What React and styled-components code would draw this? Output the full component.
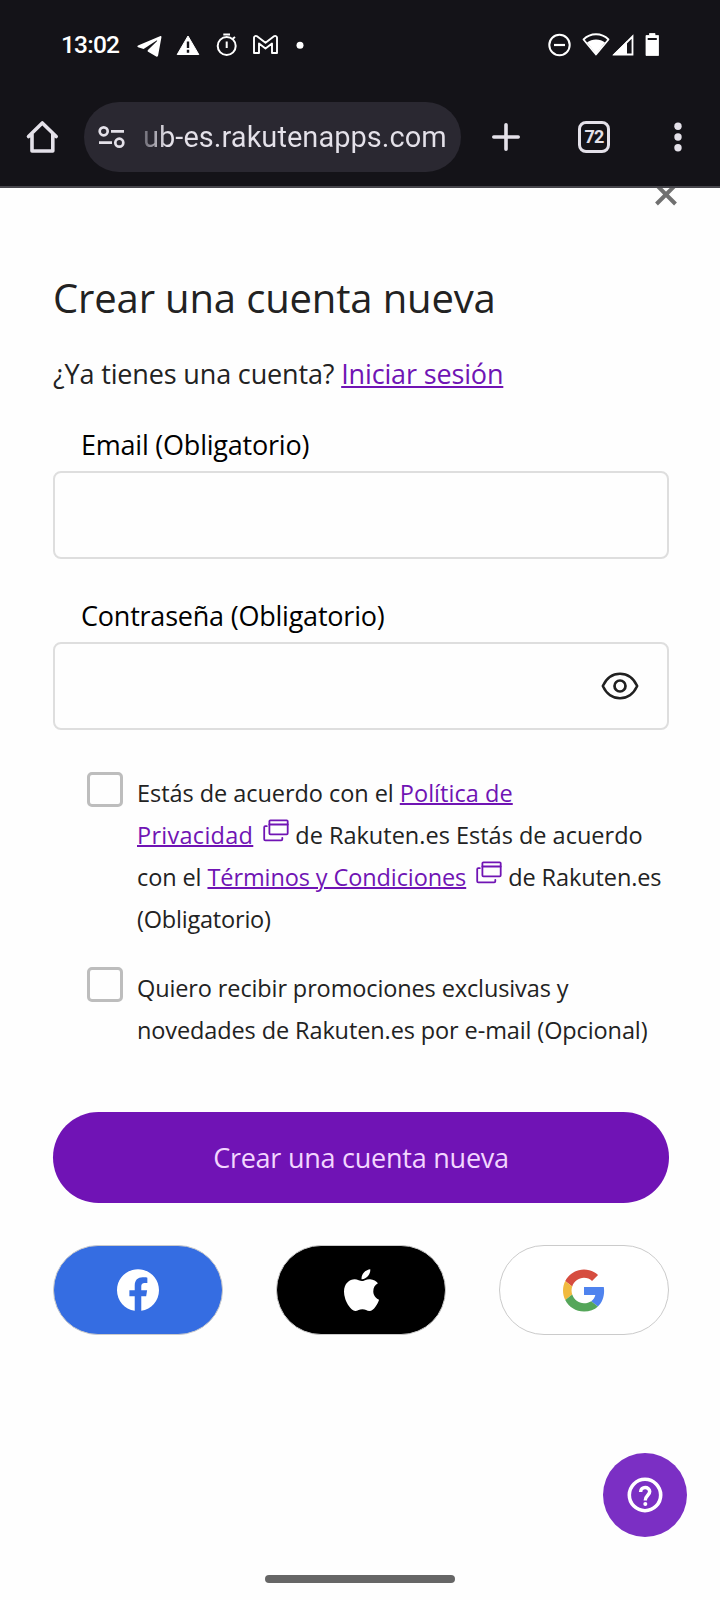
import React from 'react';
import styled, { createGlobalStyle } from 'styled-components';

const GlobalStyle = createGlobalStyle`
  * { box-sizing: border-box; }
  body { margin: 0; background: #fff; }
`;

const Screen = styled.div`
  width: 720px;
  height: 1600px;
  display: flex;
  flex-direction: column;
  position: relative;
  overflow: hidden;
  background: #fefefe;
  color: #222;
  font-family: 'Open Sans', 'Noto Sans', sans-serif;
`;

const StatusBar = styled.header`
  height: 90px;
  flex: none;
  background: #141318;
  color: #fff;
  display: flex;
  align-items: center;
  justify-content: space-between;
  padding: 0 59px 0 61px;
  svg { display: block; }
`;

const Clock = styled.time`
  width: 59px;
  font: 500 24.5px/30px Roboto, sans-serif;
  letter-spacing: -0.8px;
`;

const IconRun = styled.div`
  display: flex;
  align-items: center;
  gap: ${(p) => p.$gap || 0}px;
`;

const Toolbar = styled.nav`
  height: 98px;
  flex: none;
  background: #141318;
  color: #e4e1e9;
  border-bottom: 2px solid #47464c;
  display: flex;
  align-items: center;
  padding: 0 31px 2px 25px;
  svg { display: block; flex: none; }
`;

const AddressBar = styled.div`
  width: 377px;
  height: 70px;
  margin: 0 31px 0 25px;
  border-radius: 35px;
  background: #2a2831;
  display: flex;
  align-items: center;
  padding-left: 14px;
  gap: 17px;
`;

const Url = styled.span`
  font: 400 29px/36px Roboto, sans-serif;
  letter-spacing: 0.04px;
  white-space: nowrap;
  background: linear-gradient(90deg, #6a6872, #e4e1e9 24px);
  background-clip: text;
  -webkit-background-clip: text;
  color: transparent;
`;

const Tabs = styled.div`
  width: 32px;
  height: 32px;
  margin: 0 64px 0 58px;
  border: 3px solid currentColor;
  border-radius: 8px;
  display: flex;
  align-items: center;
  justify-content: center;
  font: 700 18px/20px Roboto, sans-serif;
  letter-spacing: -0.8px;
`;

const Page = styled.main`
  flex: 1;
  display: flex;
  flex-direction: column;
  padding: 0 51px 0 53px;
`;

const CloseRow = styled.div`
  height: 18px;
  display: flex;
  justify-content: flex-end;
  svg { display: block; margin-right: -9px; }
`;

const Title = styled.h1`
  margin: 64px 0 0;
  font-size: 40px;
  font-weight: 400;
  line-height: 56px;
  letter-spacing: -0.15px;
  white-space: nowrap;
`;

const Intro = styled.p`
  margin: 28px 0 0;
  font-size: 27px;
  line-height: 40px;
  letter-spacing: -0.15px;
  white-space: nowrap;
`;

const Link = styled.a`
  color: #7014b4;
  letter-spacing: ${(p) => (p.$track === undefined ? 'inherit' : `${p.$track}px`)};
  text-decoration: underline;
  text-decoration-thickness: 2px;
  text-underline-offset: 2px;
`;

const Field = styled.label`
  display: block;
  margin-top: ${(p) => p.$top}px;
`;

const FieldName = styled.span`
  display: block;
  padding-left: 28px;
  color: #000;
  font-size: 27px;
  line-height: 40px;
  letter-spacing: -0.22px;
`;

const InputBox = styled.div`
  height: 88px;
  margin-top: 6px;
  border: 2px solid #dedede;
  border-radius: 8px;
  display: flex;
  align-items: center;
  justify-content: flex-end;
  padding-right: 28px;
`;

const Consent = styled.label`
  display: flex;
  margin-top: ${(p) => p.$top}px;
  padding-left: 34px;
  gap: 14px;
`;

const Box = styled.span`
  flex: none;
  width: 36px;
  height: 35px;
  border: 3px solid #bdbdbd;
  border-radius: 5px;
`;

const ConsentText = styled.span`
  flex: none;
  font-size: 23.5px;
  line-height: 42px;
  white-space: nowrap;
  svg { display: inline-block; margin: 0 6px 0 10px; vertical-align: 2px; }
  ${Link} { text-underline-offset: 1px; }
`;

const Line = styled.span`
  display: block;
  height: 42px;
  letter-spacing: ${(p) => p.$track || 0}px;
`;

const Submit = styled.button`
  height: 91px;
  margin: 61px 0 0;
  border: 0;
  border-radius: 46px;
  background: #7013b5;
  color: #f3d6ff;
  font: 400 27px/40px 'Open Sans', sans-serif;
  letter-spacing: -0.24px;
`;

const Socials = styled.div`
  display: flex;
  justify-content: space-between;
  margin-top: 42px;
`;

const Social = styled.button`
  width: 170px;
  height: 90px;
  padding: 0;
  border: 1.5px solid #cbcbcb;
  border-radius: 45px;
  background: ${(p) => p.$bg};
  display: flex;
  align-items: center;
  justify-content: center;
`;

const HelpButton = styled.button`
  position: absolute;
  right: 33px;
  bottom: 63px;
  width: 84px;
  height: 84px;
  padding: 0;
  border: 0;
  border-radius: 50%;
  background: #7b2fc4;
  display: flex;
  align-items: center;
  justify-content: center;
`;

const GestureArea = styled.footer`
  height: 25px;
  flex: none;
  display: flex;
  justify-content: center;
`;

const GestureBar = styled.div`
  width: 190px;
  height: 8px;
  border-radius: 4px;
  background: #666;
`;

const StatusLeft = () => (
  <svg width="176" height="30" viewBox="131 30 176 30" fill="none" stroke="#fff">
    <path d="M160.500 36 138 45.600c-.9.400-.8 1.400.1 1.700l5.500 1.700 12.600-8.300c.8-.5 1.300-.1.700.5l-9.200 9.100v1.200l8.500 5c1 .5 1.700.2 1.900-.9l3.300-18.100c.2-1.100-.2-1.700-.9-1.500Z" fill="#fff" stroke="none" />
    <path d="M188 36l10.800 18.500h-21.600Z" fill="#fff" stroke="#fff" strokeWidth="1" strokeLinejoin="round" />
    <path d="M188 41.500v6.500M188 49.700v3" stroke="#141318" strokeWidth="2.400" />
    <circle cx="226.700" cy="46" r="9" strokeWidth="2" />
    <path d="M223.300 34.500h6.700M232.700 38.800l2.300-1.800M226.700 41.500v6.500" strokeWidth="2" />
    <path d="M254 37.500V53h5V43.500l6.500 5 6.500-5V53h5V37.500c0-1.500-2-2-3-1.200l-8.500 6.500-8.500-6.500c-1-.8-3-.3-3 1.200Z" strokeWidth="1.900" strokeLinejoin="round" />
    <circle cx="300" cy="45.300" r="3.500" fill="#fff" stroke="none" />
  </svg>
);

const StatusRight = () => (
  <svg width="114" height="30" viewBox="547 30 114 30" fill="none" stroke="#fff">
    <circle cx="559.500" cy="45" r="10.200" strokeWidth="2" />
    <path d="M554 45h11" strokeWidth="2.200" />
    <path d="M583.500 39.500C590.500 32.500 601.500 32.500 608.500 39.500L596 54.500Z" strokeWidth="1.800" strokeLinejoin="round" />
    <path d="M587 42.600C592 38.400 600 38.400 605 42.600L596 54Z" fill="#fff" stroke="none" />
    <path d="M632.500 36.500V54.500H614.500Z" strokeWidth="1.800" />
    <path d="M627 41V55H612.500Z" fill="#fff" stroke="none" />
    <path d="M649.500 33.500h5.500v2h3.500v20h-12.500v-20h3.500Z" fill="#fff" stroke="#fff" strokeWidth=".8" strokeLinejoin="round" />
    <path d="M647.700 39h9.100" stroke="#141318" strokeWidth="2" />
  </svg>
);

const HomeIcon = () => (
  <svg width="34" height="36" viewBox="25 119 34 36" fill="none" stroke="currentColor" strokeWidth="3.600" strokeLinejoin="round" strokeLinecap="round">
    <path d="M28.500 136.500 42.300 123 56.200 136.500M32 134V151H52.800V134" />
  </svg>
);

const SiteIcon = () => (
  <svg width="28" height="24" viewBox="98 125 28 24" fill="none" stroke="currentColor" strokeWidth="2.700">
    <circle cx="103.700" cy="131.300" r="4" />
    <circle cx="119.300" cy="142.700" r="4" />
    <path d="M111 131.300h13M99 142.700h13" />
  </svg>
);

const PlusIcon = () => (
  <svg width="28" height="28" viewBox="0 0 28 28" stroke="currentColor" strokeWidth="3.600" strokeLinecap="round">
    <path d="M14 1.800v24.400M1.800 14h24.400" />
  </svg>
);

const MenuIcon = () => (
  <svg width="8" height="30" viewBox="0 0 8 30" fill="currentColor">
    <circle cx="4" cy="4.300" r="3.700" />
    <circle cx="4" cy="15" r="3.700" />
    <circle cx="4" cy="25.700" r="3.700" />
  </svg>
);

const CloseIcon = () => (
  <svg width="24" height="18" viewBox="654 188 24 18" stroke="#707070" strokeWidth="4">
    <path d="M656.500 185 675.500 204M675.500 185 656.500 204" />
  </svg>
);

const EyeIcon = () => (
  <svg width="38" height="28" viewBox="0 0 38 28" fill="none" stroke="#202020" strokeWidth="2.500" strokeLinejoin="round">
    <path d="M1.800 14C9.500-2.300 28.500-2.300 36.200 14C28.500 30.300 9.500 30.300 1.800 14Z" />
    <circle cx="19" cy="14" r="5.500" strokeWidth="2.700" />
  </svg>
);

const WindowIcon = () => (
  <svg width="26" height="23" viewBox="0 0 26 23" fill="none" stroke="#7014b4" strokeWidth="1.800" strokeLinejoin="round" strokeLinecap="round">
    <rect x="6.400" y="1.300" width="18.300" height="14" rx="1" />
    <path d="M6.400 5.500h18.300M3.800 7.200H2.300Q1.200 7.200 1.200 8.300V20.300Q1.200 21.400 2.300 21.400H18.200Q19.300 21.400 19.300 20.300V18.800" />
  </svg>
);

const FacebookIcon = () => (
  <svg width="42" height="42" viewBox="0 0 24 24" fill="#fff">
    <path d="M24 12.073c0-6.627-5.373-12-12-12s-12 5.373-12 12c0 5.990 4.388 10.954 10.125 11.854v-8.385H7.078v-3.470h3.047V9.430c0-3.007 1.792-4.669 4.533-4.669 1.312 0 2.686.235 2.686.235v2.953H15.830c-1.491 0-1.956.925-1.956 1.874v2.250h3.328l-.532 3.470h-2.796v8.385C19.612 23.027 24 18.062 24 12.073z" />
  </svg>
);

const AppleIcon = () => (
  <svg width="35" height="42" viewBox="4 31.500 376 448" fill="#fff">
    <path d="M318.700 268.700c-.2-36.700 16.400-64.400 50-84.800-18.800-26.900-47.200-41.700-84.700-44.600-35.500-2.800-74.300 20.700-88.500 20.700-15 0-49.400-19.700-76.400-19.700C63.300 141.200 4 184.800 4 273.500q0 39.300 14.400 81.200c12.800 36.700 59 126.700 107.200 125.200 25.200-.6 43-17.900 75.800-17.900 31.800 0 48.300 17.900 76.400 17.900 48.600-.7 90.400-82.500 102.600-119.300-65.200-30.700-61.700-90-61.700-91.900zm-56.600-164.200c27.300-32.400 24.800-61.900 24-72.500-24.100 1.400-52 16.400-67.900 34.900-17.500 19.800-27.800 44.300-25.600 71.900 26.100 2 49.900-11.400 69.500-34.300z" />
  </svg>
);

const GoogleIcon = () => (
  <svg width="42" height="43" viewBox="2 2 44 44">
    <path fill="#d64d3f" d="M24 9.500c3.540 0 6.710 1.220 9.210 3.600l6.850-6.850C35.900 2.380 30.470 0 24 0 14.620 0 6.510 5.380 2.560 13.220l7.980 6.190C12.430 13.720 17.740 9.500 24 9.500z" transform="translate(2 2) scale(.9167)" />
    <path fill="#4f83ee" d="M46.980 24.550c0-1.570-.15-3.090-.38-4.550H24v9.020h12.940c-.58 2.960-2.260 5.480-4.780 7.180l7.730 6c4.510-4.180 7.090-10.360 7.090-17.650z" transform="translate(2 2) scale(.9167)" />
    <path fill="#f1ba3f" d="M10.530 28.590c-.48-1.450-.76-2.990-.76-4.590s.27-3.140.76-4.590l-7.980-6.190C.92 16.460 0 20.120 0 24c0 3.880.92 7.540 2.560 10.780l7.970-6.190z" transform="translate(2 2) scale(.9167)" />
    <path fill="#55a65a" d="M24 48c6.480 0 11.930-2.130 15.890-5.810l-7.730-6c-2.150 1.450-4.920 2.300-8.160 2.300-6.260 0-11.570-4.220-13.470-9.910l-7.980 6.190C6.510 42.620 14.620 48 24 48z" transform="translate(2 2) scale(.9167)" />
  </svg>
);

const HelpIcon = () => (
  <svg width="36" height="36" viewBox="0 0 36 36" fill="none" stroke="#fff" strokeWidth="3.600">
    <circle cx="18" cy="18" r="15.700" />
    <path d="M13.600 15C13.600 9 22.700 9.300 22.700 14.600C22.700 18.200 18.300 18.600 18.300 23.500" strokeWidth="3.500" />
    <circle cx="18.300" cy="27" r="2" fill="#fff" stroke="none" />
  </svg>
);

export default function App() {
  return (
    <Screen>
      <GlobalStyle />
      <StatusBar>
        <IconRun $gap={11}>
          <Clock>13:02</Clock>
          <StatusLeft />
        </IconRun>
        <StatusRight />
      </StatusBar>
      <Toolbar>
        <HomeIcon />
        <AddressBar>
          <SiteIcon />
          <Url>ub-es.rakutenapps.com</Url>
        </AddressBar>
        <PlusIcon />
        <Tabs>72</Tabs>
        <MenuIcon />
      </Toolbar>
      <Page>
        <CloseRow><CloseIcon /></CloseRow>
        <Title>Crear una cuenta nueva</Title>
        <Intro>¿Ya tienes una cuenta? <Link>Iniciar sesión</Link></Intro>
        <Field $top={31}>
          <FieldName>Email (Obligatorio)</FieldName>
          <InputBox />
        </Field>
        <Field $top={37}>
          <FieldName>Contraseña (Obligatorio)</FieldName>
          <InputBox><EyeIcon /></InputBox>
        </Field>
        <Consent $top={42}>
          <Box />
          <ConsentText>
            <Line $track={-0.05}>Estás de acuerdo con el <Link $track={0.05}>Política de</Link></Line>
            <Line><Link $track={0.28}>Privacidad</Link><WindowIcon />de Rakuten.es Estás de acuerdo</Line>
            <Line $track={-0.1}>con el <Link>Términos y Condiciones</Link><WindowIcon />de Rakuten.es</Line>
            <Line $track={-0.2}>(Obligatorio)</Line>
          </ConsentText>
        </Consent>
        <Consent $top={27}>
          <Box />
          <ConsentText>
            <Line $track={-0.12}>Quiero recibir promociones exclusivas y</Line>
            <Line $track={-0.11}>novedades de Rakuten.es por e-mail (Opcional)</Line>
          </ConsentText>
        </Consent>
        <Submit>Crear una cuenta nueva</Submit>
        <Socials>
          <Social $bg="#356de2"><FacebookIcon /></Social>
          <Social $bg="#000"><AppleIcon /></Social>
          <Social $bg="#fff"><GoogleIcon /></Social>
        </Socials>
      </Page>
      <HelpButton><HelpIcon /></HelpButton>
      <GestureArea><GestureBar /></GestureArea>
    </Screen>
  );
}
